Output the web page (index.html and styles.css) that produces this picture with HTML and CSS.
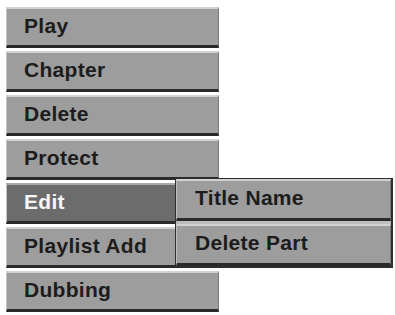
FILE: index.html
```html
<!DOCTYPE html>
<html>
<head>
<meta charset="utf-8">
<link rel="stylesheet" href="styles.css">
</head>
<body>
<div class="screen">
  <ul class="menu">
    <li class="item">Play</li>
    <li class="item">Chapter</li>
    <li class="item">Delete</li>
    <li class="item">Protect</li>
    <li class="item active">Edit</li>
    <li class="item">Playlist Add</li>
    <li class="item">Dubbing</li>
  </ul>
  <ul class="submenu">
    <li class="item sub">Title Name</li>
    <li class="item sub">Delete Part</li>
  </ul>
</div>
</body>
</html>
```
FILE: styles.css
```css
html, body {
  margin: 0;
  padding: 0;
  background: #ffffff;
}
.screen {
  position: relative;
  width: 395px;
  height: 315px;
  overflow: hidden;
}
ul {
  list-style: none;
  margin: 0;
  padding: 0;
}
.menu {
  display: flex;
  flex-direction: column;
  gap: 3px;
  width: 213px;
  padding: 7px 0 0 6px;
}
.item {
  box-sizing: border-box;
  height: 41px;
  display: flex;
  align-items: center;
  padding: 0 0 3px 17px;
  background: #9d9d9d;
  border-top: 2px solid #d2d2d2;
  border-left: 1px solid #c4c4c4;
  border-right: 1px solid #7a7a7a;
  border-bottom: 3px solid #2a2a2a;
  font-family: "Liberation Sans", Arial, sans-serif;
  font-weight: bold;
  font-size: 21px;
  letter-spacing: 0.3px;
  color: #1c1c1c;
}
.item.active {
  background: #6c6c6c;
  border-top-color: #a8a8a8;
  color: #f6f6f6;
}
.submenu {
  position: absolute;
  left: 175px;
  top: 178px;
  width: 218px;
  box-sizing: border-box;
  display: flex;
  flex-direction: column;
  gap: 3px;
  border: 2px solid #2e2e2e;
  border-left-width: 1px;
  border-top-width: 1px;
  background: #bdbdbd;
}
.item.sub {
  height: 42px;
  padding-left: 18px;
  border-left-color: #bcbcbc;
}
```
